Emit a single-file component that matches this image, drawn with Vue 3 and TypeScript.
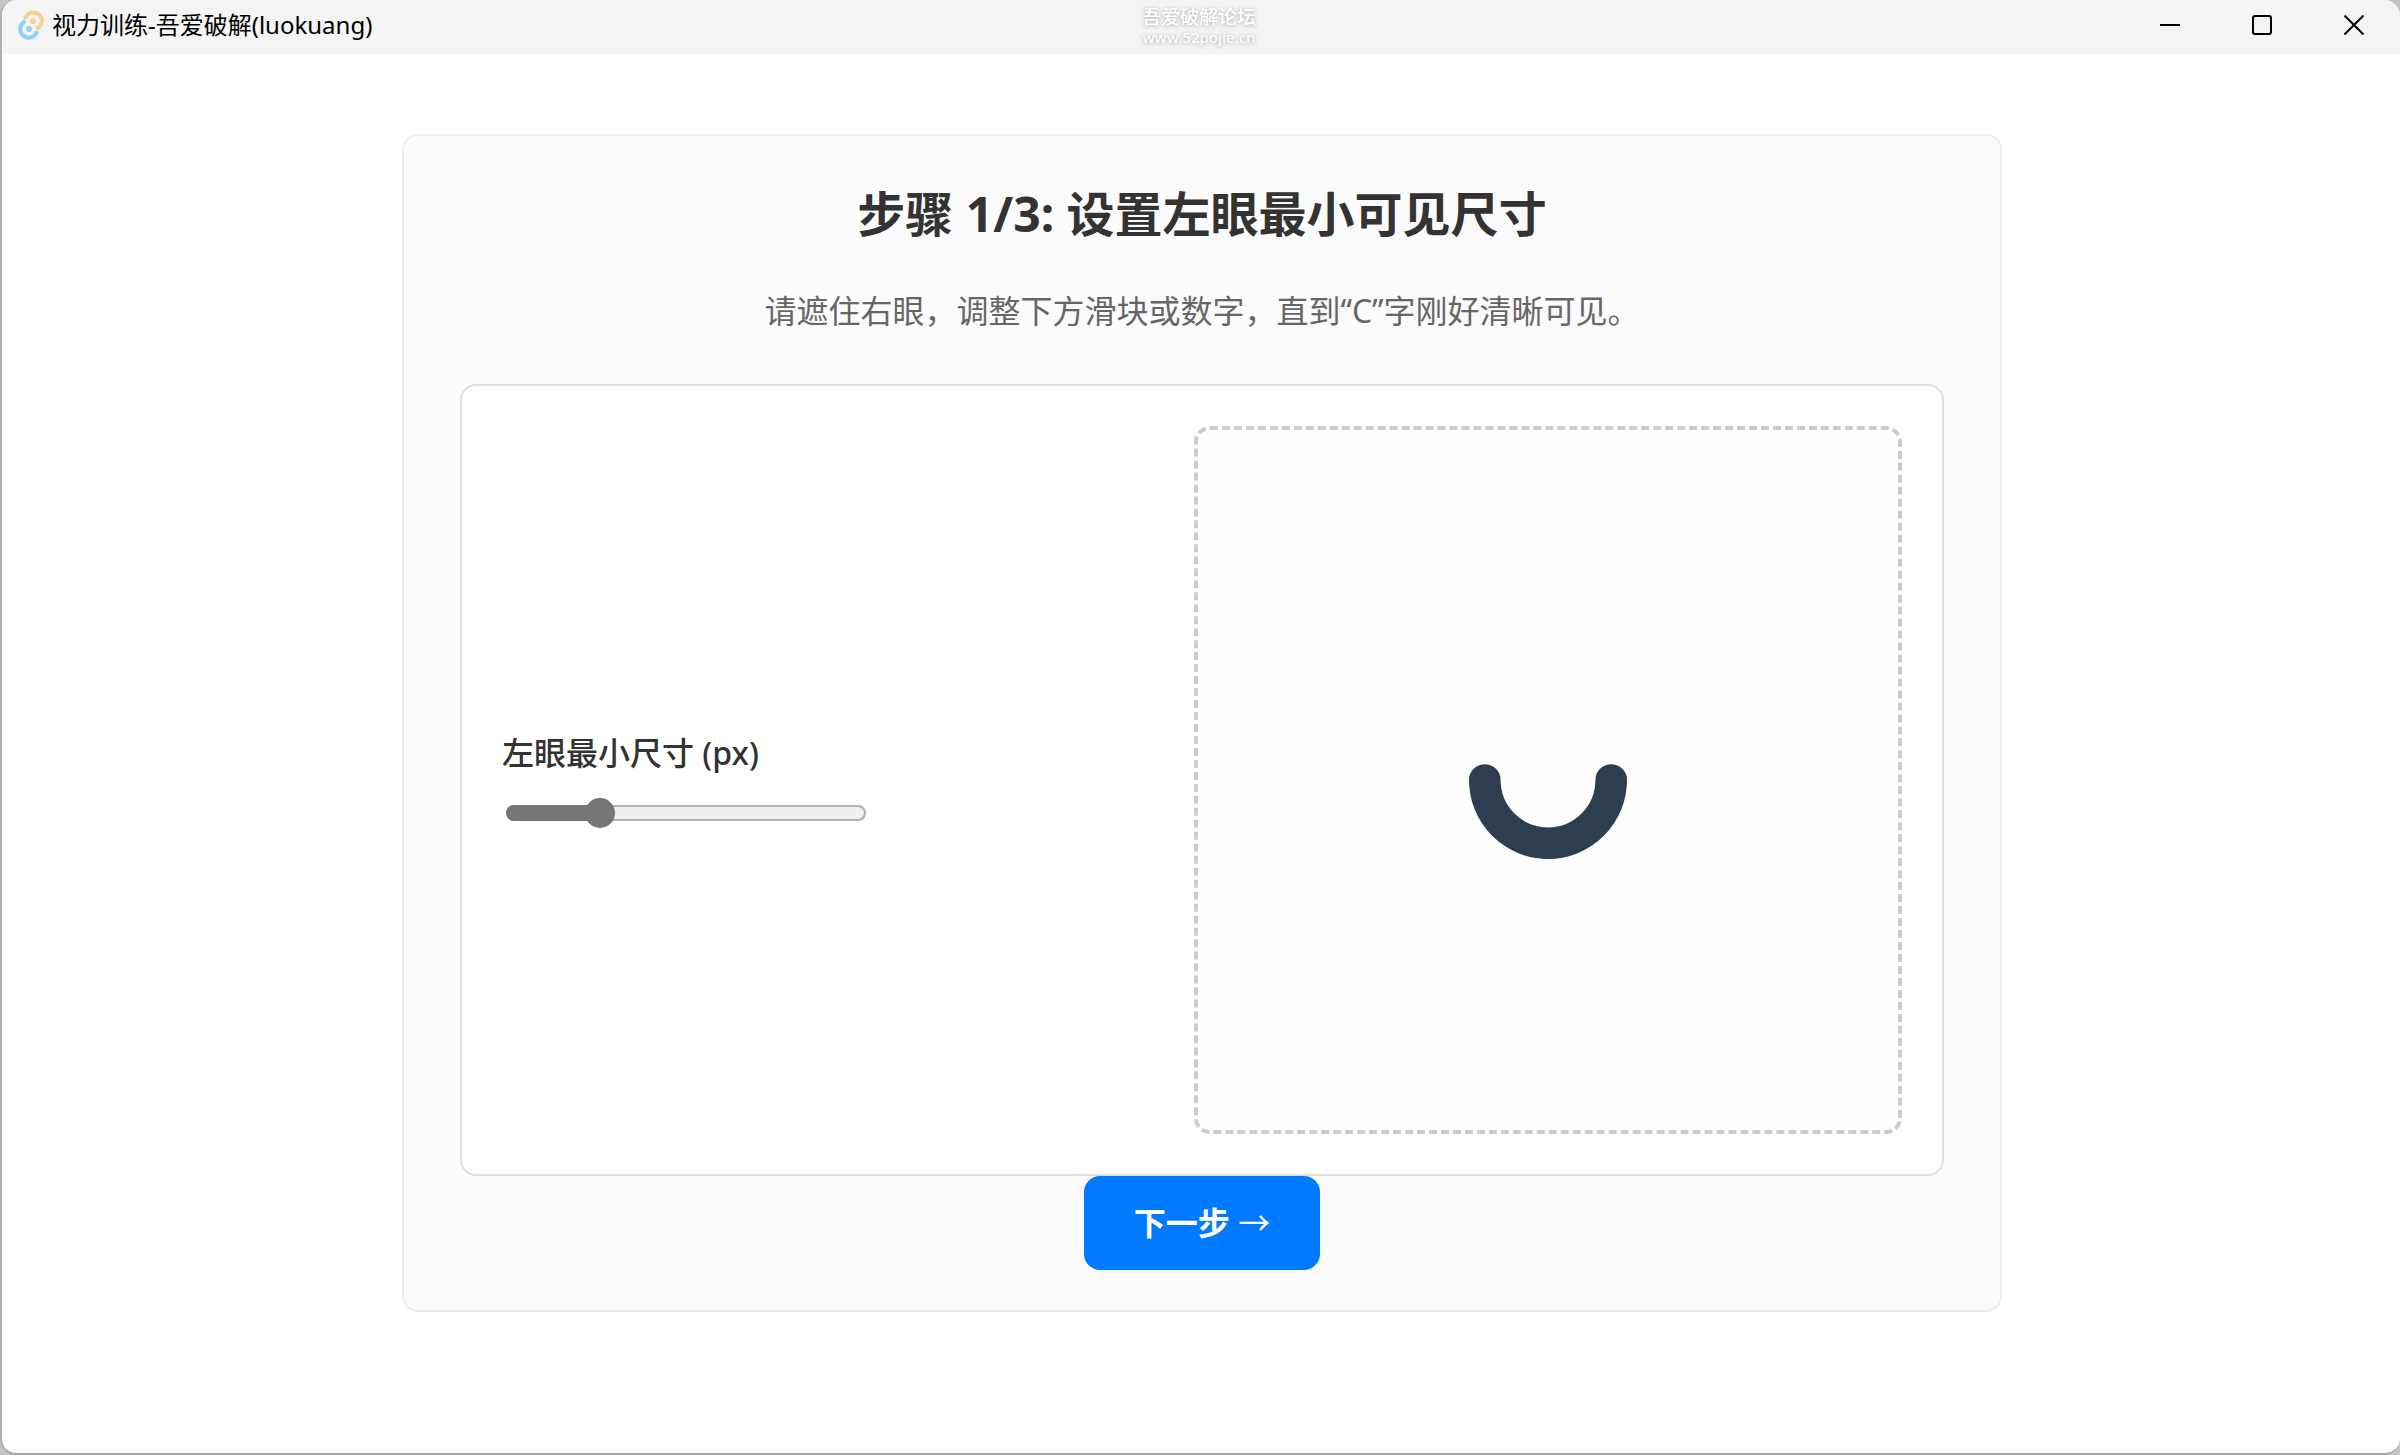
<script setup lang="ts">
import { computed, ref } from 'vue'

const MIN_SIZE = 10
const MAX_SIZE = 300

const size = ref<number>(79)

const fill = computed(() => ((size.value - MIN_SIZE) / (MAX_SIZE - MIN_SIZE)) * 100)
const glyph = computed(() => size.value * 2)
</script>

<template>
  <div class="window">
    <header class="titlebar">
      <div class="app-name">
        <svg class="app-icon" viewBox="0 0 26 30" aria-hidden="true">
          <path
            d="M7 9A8.5 8.5 0 1 1 18.5 18.8"
            fill="none"
            stroke="#f8ce92"
            stroke-width="4"
          />
          <circle cx="15" cy="11" r="3" fill="#f8ce92" />
          <path
            d="M19 21A8.5 8.5 0 1 1 7.5 11.2"
            fill="none"
            stroke="#8fd0f6"
            stroke-width="4"
          />
          <circle cx="11" cy="19" r="3" fill="#8fd0f6" />
        </svg>
        <span>视力训练-吾爱破解(luokuang)</span>
      </div>
      <div class="watermark">
        <span class="watermark-name">吾爱破解论坛</span>
        <span class="watermark-url">www.52pojie.cn</span>
      </div>
      <div class="controls">
        <button type="button" aria-label="最小化">
          <svg viewBox="0 0 20 20"><path d="M0 10H20" /></svg>
        </button>
        <button type="button" aria-label="最大化">
          <svg viewBox="0 0 20 20"><rect x="1" y="1" width="18" height="18" rx="2" /></svg>
        </button>
        <button type="button" aria-label="关闭">
          <svg viewBox="0 0 20 20"><path d="M0.5 0.5L19.5 19.5M19.5 0.5L0.5 19.5" /></svg>
        </button>
      </div>
    </header>

    <main class="content">
      <section class="card">
        <h1>步骤 1/3: 设置左眼最小可见尺寸</h1>
        <p class="hint">请遮住右眼，调整下方滑块或数字，直到“C”字刚好清晰可见。</p>

        <div class="panel">
          <div class="field">
            <label for="left-size">左眼最小尺寸 (px)</label>
            <input
              id="left-size"
              v-model.number="size"
              type="range"
              :min="MIN_SIZE"
              :max="MAX_SIZE"
              :style="{ '--fill': fill + '%' }"
            />
          </div>
          <div class="preview">
            <svg :width="glyph" :height="glyph" viewBox="0 0 100 100" role="img" aria-label="C">
              <path d="M10 50A40 40 0 0 0 90 50" />
            </svg>
          </div>
        </div>

        <button type="button" class="next">下一步 <span class="arrow">→</span></button>
      </section>
    </main>
  </div>
</template>

<style>
body {
  background: #c4c4c4;
}
</style>

<style scoped>
.window {
  box-sizing: border-box;
  min-height: 100vh;
  display: flex;
  flex-direction: column;
  overflow: hidden;
  border-left: 2px solid #b0b0b0;
  border-bottom: 2px solid #a6a6a6;
  border-radius: 16px;
  background: #fff;
  color: #333;
  font-family: 'Noto Sans', 'Noto Sans CJK SC', sans-serif;
}

.titlebar {
  display: grid;
  grid-template-columns: 1fr auto 1fr;
  align-items: center;
  height: 54px;
  background: #f4f4f4;
  color: #000;
}

.app-name {
  display: flex;
  align-items: center;
  gap: 8px;
  padding: 0 0 4px 16px;
  font-size: 24px;
  line-height: 48px;
  white-space: nowrap;
}

.app-icon {
  width: 26px;
  height: 30px;
}

.watermark {
  display: flex;
  flex-direction: column;
  align-items: center;
  padding-right: 4px;
  color: #fff;
  text-shadow: 0 1px 4px #b8b8b8, 0 0 2px #d0d0d0;
}

.watermark-name {
  font-size: 19px;
  font-weight: 500;
  line-height: 20px;
}

.watermark-url {
  font-size: 15px;
  font-weight: 500;
  line-height: 20px;
}

.controls {
  display: flex;
  justify-content: flex-end;
  align-self: stretch;
}

.controls button {
  width: 92px;
  padding: 0 0 4px;
  border: 0;
  background: none;
}

.controls svg {
  display: block;
  width: 20px;
  height: 20px;
  margin: 0 auto;
  fill: none;
  stroke: #000;
  stroke-width: 2;
}

.content {
  flex: 1;
  padding: 80px 0 80px 2px;
}

.card {
  box-sizing: border-box;
  max-width: 1600px;
  margin: 0 auto;
  padding: 40px 56px;
  border: 2px solid #eee;
  border-radius: 16px;
  background: #fbfbfb;
  text-align: center;
}

h1 {
  margin: 0 0 35px;
  font-size: 48px;
  font-weight: 700;
  line-height: 76px;
}

.hint {
  margin: 0 0 49px;
  color: #666;
  font-size: 32px;
  line-height: 48px;
}

.panel {
  display: flex;
  align-items: center;
  justify-content: space-between;
  padding: 40px;
  border: 2px solid #e0e0e0;
  border-radius: 16px;
  background: #fff;
}

.field {
  display: flex;
  flex-direction: column;
  align-items: flex-start;
  gap: 20px;
  padding-bottom: 3px;
}

.field label {
  font-size: 32px;
  font-weight: 500;
  line-height: 48px;
}

.field input {
  appearance: none;
  width: 360px;
  height: 32px;
  margin: 0 4px;
  background: none;
}

.field input::-webkit-slider-runnable-track {
  box-sizing: border-box;
  height: 16px;
  border-radius: 8px;
  background: linear-gradient(90deg, #767676 var(--fill), #efefef var(--fill));
  box-shadow: inset 0 0 0 2px rgb(118 118 118 / 50%);
}

.field input::-webkit-slider-thumb {
  appearance: none;
  width: 30px;
  height: 30px;
  margin-top: -7px;
  border-radius: 50%;
  background: #767676;
}

.preview {
  display: flex;
  align-items: center;
  justify-content: center;
  width: 700px;
  height: 700px;
  border: 4px dashed #ccc;
  border-radius: 16px;
  background: #fefefe;
}

.preview path {
  fill: none;
  stroke: #2c3e50;
  stroke-width: 20;
  stroke-linecap: round;
}

.next {
  display: block;
  margin: 0 auto;
  padding: 23px 50px;
  border: 0;
  border-radius: 16px;
  background: #007bff;
  color: #fff;
  font-family: inherit;
  font-size: 32px;
  font-weight: 700;
  line-height: 48px;
}

.arrow {
  font-family: 'Noto Sans CJK SC', sans-serif;
  font-weight: 400;
  line-height: 32px;
}
</style>
